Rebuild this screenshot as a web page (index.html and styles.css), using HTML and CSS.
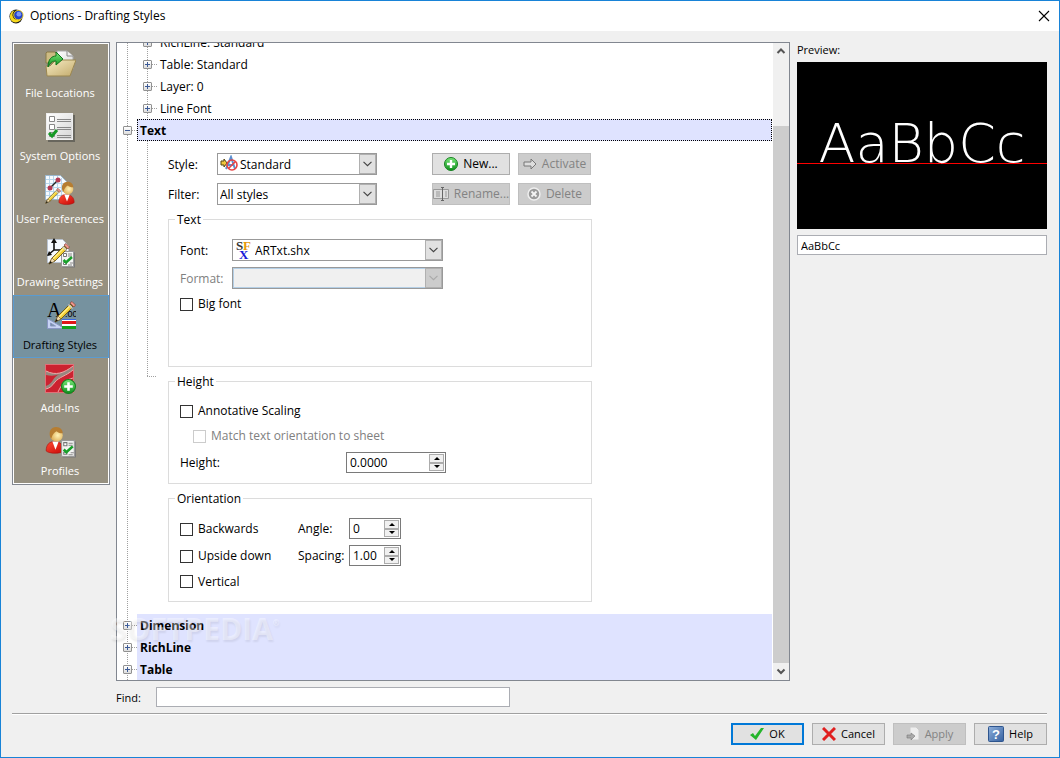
FILE: index.html
```html
<!DOCTYPE html>
<html lang="en">
<head>
    <meta charset="UTF-8">
    <title>Options - Drafting Styles</title>
    <link rel="stylesheet" href="styles.css">
</head>
<body>
    <!-- shared shapes -->
    <svg class="defs" width="0" height="0" aria-hidden="true">
        <defs>
            <linearGradient id="gFolder" x1="0" y1="0" x2="1" y2="1"><stop offset="0" stop-color="#f7ecc4"/><stop offset="1" stop-color="#c3ab6c"/></linearGradient>
            <linearGradient id="gPage" x1="0" y1="0" x2="1" y2="1"><stop offset="0" stop-color="#fff"/><stop offset="1" stop-color="#d5d5d5"/></linearGradient>
            <linearGradient id="gGreen" x1="0" y1="0" x2="0" y2="1"><stop offset="0" stop-color="#7be87b"/><stop offset="1" stop-color="#0d8f1b"/></linearGradient>
            <linearGradient id="gRed" x1="0" y1="0" x2="1" y2="1"><stop offset="0" stop-color="#ff4a32"/><stop offset="1" stop-color="#c80808"/></linearGradient>
            <linearGradient id="gBlue" x1="0" y1="0" x2="1" y2="1"><stop offset="0" stop-color="#8fb0dc"/><stop offset="1" stop-color="#34609f"/></linearGradient>
            <radialGradient id="gHead" cx=".6" cy=".5" r=".6"><stop offset="0" stop-color="#fff3b8"/><stop offset="1" stop-color="#dca94e"/></radialGradient>
            <symbol id="plusball" viewBox="0 0 14 14">
                <circle cx="7" cy="7" r="6.5" fill="url(#gGreen)" stroke="#16801f"/>
                <path d="M7 3v8M3 7h8" stroke="#fff" stroke-width="2.4"/>
            </symbol>
            <symbol id="checklist" viewBox="0 0 14 17">
                <rect x="1.5" y="1.5" width="12.500" height="15" fill="#777"/>
                <rect x=".5" y=".5" width="12" height="15" fill="#f4f4f4" stroke="#999"/>
                <path d="M2.500 2.500h3v3h-3zM2.500 11.500h3v2h-3z" fill="#fff" stroke="#777"/>
                <path d="M7 3h4M7 5h4M9 12h3M7 14h4" stroke="#888"/>
                <path d="M2.500 9l2.500 2.500L11 6" fill="none" stroke="#18a02a" stroke-width="2.500"/>
            </symbol>
            <symbol id="pencil" viewBox="0 0 22 22">
                <path d="M1 21l3-6 12-12 3 3L7 18z" fill="#f3cf35" stroke="#5b4610" stroke-width=".8"/>
                <path d="M5 16L16 5" stroke="#fff08a" stroke-width="1.200"/>
                <path d="M16 2l2-1.500 3.500 3.500L20 6z" fill="#f0978a" stroke="#8c4b42" stroke-width=".8"/>
                <path d="M14.500 3.500l4 4" stroke="#ccc" stroke-width="1.600"/>
                <path d="M1 21l3-6 3 3z" fill="#f5dfb4" stroke="#6a5428" stroke-width=".6"/>
                <path d="M1 21l1.500-3 1.500 1.500z" fill="#111"/>
            </symbol>
            <symbol id="person" viewBox="0 0 20 26">
                <path d="M1 23c0-6 3-9 8-9s9 3 9 9c-3 3-14 3-17 0z" fill="url(#gRed)" stroke="#a41410" stroke-width=".6"/>
                <path d="M7 14l3 8 3-8z" fill="#fff"/>
                <circle cx="11" cy="8" r="6" fill="url(#gHead)"/>
                <path d="M5 10C3 4 6 0 10.500 0S17 3 17 6c-3 0-5-1-6-2-2 1-4 3-5 7z" fill="#b67d31"/>
            </symbol>
            <symbol id="chevron" viewBox="0 0 17 20">
                <path d="M4 7.500l4.500 4.500L13 7.500" fill="none" stroke="currentColor" stroke-width="1.300"/>
            </symbol>
        </defs>
    </svg>

    <div class="window">
        <header class="titlebar">
            <svg class="app-icon" viewBox="0 0 16 16" aria-hidden="true">
                <ellipse cx="7.500" cy="8" rx="7" ry="7.500" fill="#15151c"/>
                <path d="M4 2C0 5 0 11 4 13.500c4 2 8 0 9.500-3C10 12 6 11.500 4.500 9S3.500 4 6 1.500z" fill="#f6d81c"/>
                <circle cx="10" cy="6.500" r="5" fill="#2444cf" stroke="#f1d21c"/>
                <circle cx="10.500" cy="5.500" r="2.500" fill="#7a96f5"/>
            </svg>
            <h1>Options - Drafting Styles</h1>
            <button class="close" aria-label="Close"><svg viewBox="0 0 12 12"><path d="M1 1l10 10M11 1L1 11" stroke="#000" stroke-width="1.100"/></svg></button>
        </header>

        <main class="content">
            <nav class="sidebar">
                <button class="nav-item">
                    <svg viewBox="0 0 32 32">
                        <path d="M2 5l1-1h8l2 2h13v9H2z" fill="#cdbb83" stroke="#8a7a49"/>
                        <path d="M13 3h10l6 5v13H13z" fill="url(#gPage)" stroke="#aaa"/>
                        <path d="M23 3v5h6" fill="#eee" stroke="#888"/>
                        <path d="M3 28l-1-10h4l6-6h20l-6 16z" fill="url(#gFolder)" stroke="#9b8750"/>
                        <path d="M4 19c0-8 4-11 8-11V4l7 7-7 6v-4c-4 0-6 2-8 6z" fill="url(#gGreen)" stroke="#11741c"/>
                    </svg>
                    <span>File Locations</span>
                </button>
                <button class="nav-item">
                    <svg viewBox="0 0 32 32">
                        <path d="M4 4h27v27H4z" fill="#68665d"/>
                        <rect x="2.500" y="2.500" width="26" height="26" fill="url(#gPage)" stroke="#eee"/>
                        <path d="M5.500 5.500h5v5h-5zM5.500 13.500h5v5h-5zM5.500 21.500h5v4h-5z" fill="#fff" stroke="#888"/>
                        <path d="M13 8.500h14M13 10.500h14M13 16.500h14M13 18.500h14M13 24.500h14M13 26.500h14" stroke="#888"/>
                        <path d="M5 22l3 3 5-6" fill="none" stroke="#159924" stroke-width="3"/>
                    </svg>
                    <span>System Options</span>
                </button>
                <button class="nav-item">
                    <svg viewBox="0 0 32 32">
                        <path d="M1.500 1.500h15l6 6v18h-21z" fill="#f7fbff" stroke="#9bb8cf"/>
                        <path d="M5.500 2v23M9.500 2v23M13.500 2v23M17.500 4v21M2 5.500h16M2 9.500h20M2 13.500h20M2 17.500h20M2 21.500h20" stroke="#b7d6ec"/>
                        <path d="M6 14l8-8" stroke="#222" stroke-width="1.500"/>
                        <circle cx="6" cy="14" r="2.500" fill="#b53952"/><circle cx="14" cy="6" r="2.500" fill="#b53952"/>
                        <use href="#person" x="14" y="7" width="18" height="25"/>
                        <use href="#pencil" x="1" y="14" width="16" height="16"/>
                    </svg>
                    <span>User Preferences</span>
                </button>
                <button class="nav-item">
                    <svg viewBox="0 0 32 32">
                        <path d="M3.500 2.500h15l6 6v17h-21z" fill="#f5f9ff" stroke="#b9c3d0"/>
                        <path d="M10 3v10M10 13h11M10 13l-6 5" fill="none" stroke="#111" stroke-width="1.600"/>
                        <path d="M10 1l3 5H7zM23 13l-5-3v6zM3 19l2-5 3 4z" fill="#111"/>
                        <use href="#checklist" x="17" y="14" width="14" height="17"/>
                        <use href="#pencil" x="4" y="6" width="22" height="22"/>
                    </svg>
                    <span>Drawing Settings</span>
                </button>
                <button class="nav-item selected" aria-current="page">
                    <svg viewBox="0 0 32 32">
                        <path d="M3.500 18.500v10h17z" fill="#c7d3f3" stroke="#8a97c4"/>
                        <path d="M6.500 23v3h5z" fill="#76929f" stroke="#8a97c4"/>
                        <text x="3" y="17" class="glyph-serif">A</text>
                        <text x="21" y="17" class="glyph-small">.00</text>
                        <path d="M18 19.500h14" stroke="#3c6be0"/><path d="M18 20h14v1H18zM18 24h14v2H18z" fill="#fff"/><path d="M18 21h14v3H18z" fill="#e01818"/><path d="M18 26h14v3H18z" fill="#13a31c"/>
                        <use href="#pencil" x="10" y="1" width="22" height="22"/>
                    </svg>
                    <span>Drafting Styles</span>
                </button>
                <button class="nav-item">
                    <svg viewBox="0 0 32 32">
                        <rect x="1.500" y="1.500" width="28" height="28" fill="#cc2230" stroke="#e07078"/>
                        <path d="M2 8c10 5 18 2 27-5v4c-7 6-14 7-18 12-3 4-5 6-9 7v-3c8-3 6-9 14-12-5 2-9 2-14 1z" fill="#98877f"/>
                        <path d="M2 8c10 5 18 2 27-5M29 7c-7 6-14 7-18 12-3 4-5 6-9 7M29 15c-7 2-11 5-15 14" fill="none" stroke="#efa5a5"/>
                        <use href="#plusball" x="17" y="16" width="15" height="15"/>
                    </svg>
                    <span>Add-Ins</span>
                </button>
                <button class="nav-item">
                    <svg viewBox="0 0 32 32">
                        <use href="#person" x="1" y="1" width="21" height="27"/>
                        <use href="#checklist" x="17" y="14" width="15" height="18"/>
                    </svg>
                    <span>Profiles</span>
                </button>
            </nav>

            <section class="styles-column">
                <div class="tree">
                    <div class="tree-body">
                        <div class="branch">
                            <div class="row child"><button class="toggle plus" aria-label="Expand"></button><span>RichLine: Standard</span></div>
                            <div class="row child"><button class="toggle plus" aria-label="Expand"></button><span>Table: Standard</span></div>
                            <div class="row child"><button class="toggle plus" aria-label="Expand"></button><span>Layer: 0</span></div>
                            <div class="row child"><button class="toggle plus" aria-label="Expand"></button><span>Line Font</span></div>
                        </div>
                        <div class="row root focused"><button class="toggle" aria-label="Collapse"></button><span>Text</span></div>

                        <form class="panel">
                            <div class="style-rows">
                                <label for="style">Style:</label>
                                <div class="combo with-icon">
                                    <select id="style"><option>Standard</option></select>
                                    <svg class="combo-icon" viewBox="0 0 18 18" aria-hidden="true">
                                        <path d="M6 14l5-12 4 12M8 10h6" fill="none" stroke="#5a8fd0" stroke-width="2"/>
                                        <path d="M1 6h3V4l3 4-3 4v-2H1z" fill="#f0c53c" stroke="#554715"/>
                                        <circle cx="12" cy="10" r="5" fill="none" stroke="#e64444" stroke-width="1.600"/>
                                        <path d="M8.500 13.500l7-7" stroke="#e64444" stroke-width="1.600"/>
                                    </svg>
                                    <svg class="drop"><use href="#chevron"/></svg>
                                </div>
                                <button type="button" class="btn"><svg viewBox="0 0 14 14"><use href="#plusball"/></svg>New...</button>
                                <button type="button" class="btn" disabled><svg viewBox="0 0 14 14"><path d="M1 5h7V2l5 5-5 5V9H1z" fill="#ddd" stroke="#777"/></svg>Activate</button>

                                <label for="filter">Filter:</label>
                                <div class="combo">
                                    <select id="filter"><option>All styles</option></select>
                                    <svg class="drop"><use href="#chevron"/></svg>
                                </div>
                                <button type="button" class="btn" disabled><svg class="wide" viewBox="0 0 16 14"><path d="M.5 2.500h15v9H.5z" fill="#ddd" stroke="#999"/><path d="M3 5h4M3 7h4M3 9h4M12 5h2M12 7h2M12 9h2" stroke="#999"/><path d="M8 .5h3M9.500 0v14M8 13.500h3" stroke="#666"/></svg>Rename...</button>
                                <button type="button" class="btn" disabled><svg viewBox="0 0 14 14"><circle cx="7" cy="7" r="6" fill="#9a9a9a" stroke="#eee" stroke-width="1.500"/><path d="M4.500 4.500l5 5M9.500 4.500l-5 5" stroke="#f4f4f4" stroke-width="1.800"/></svg>Delete</button>
                            </div>

                            <fieldset class="text-group">
                                <legend>Text</legend>
                                <div class="font-grid">
                                    <label for="font">Font:</label>
                                    <div class="combo with-icon">
                                        <select id="font"><option>ARTxt.shx</option></select>
                                        <svg class="combo-icon" viewBox="0 0 18 18" aria-hidden="true">
                                            <text x="1" y="9" class="glyph-shx dark">S</text>
                                            <text x="8" y="9" class="glyph-shx gold">F</text>
                                            <text x="4" y="18" class="glyph-shx blue">X</text>
                                        </svg>
                                        <svg class="drop"><use href="#chevron"/></svg>
                                    </div>
                                    <label for="format" class="off">Format:</label>
                                    <div class="combo disabled">
                                        <select id="format" disabled><option></option></select>
                                        <svg class="drop"><use href="#chevron"/></svg>
                                    </div>
                                </div>
                                <label class="check"><input type="checkbox">Big font</label>
                            </fieldset>

                            <fieldset class="height-group">
                                <legend>Height</legend>
                                <label class="check"><input type="checkbox">Annotative Scaling</label>
                                <label class="check indent off"><input type="checkbox" disabled>Match text orientation to sheet</label>
                                <div class="height-row">
                                    <label for="height">Height:</label>
                                    <div class="spin">
                                        <input type="text" id="height" value="0.0000">
                                        <div class="arrows"><button type="button" class="up" aria-label="Increase"></button><button type="button" class="down" aria-label="Decrease"></button></div>
                                    </div>
                                </div>
                            </fieldset>

                            <fieldset class="orientation-group">
                                <legend>Orientation</legend>
                                <div class="orientation-grid">
                                    <label class="check"><input type="checkbox">Backwards</label>
                                    <label for="angle">Angle:</label>
                                    <div class="spin">
                                        <input type="text" id="angle" value="0">
                                        <div class="arrows"><button type="button" class="up" aria-label="Increase"></button><button type="button" class="down" aria-label="Decrease"></button></div>
                                    </div>
                                    <label class="check"><input type="checkbox">Upside down</label>
                                    <label for="spacing">Spacing:</label>
                                    <div class="spin">
                                        <input type="text" id="spacing" value="1.00">
                                        <div class="arrows"><button type="button" class="up" aria-label="Increase"></button><button type="button" class="down" aria-label="Decrease"></button></div>
                                    </div>
                                    <label class="check"><input type="checkbox">Vertical</label>
                                </div>
                            </fieldset>
                        </form>

                        <div class="row root"><button class="toggle plus" aria-label="Expand"></button><span>Dimension</span></div>
                        <div class="row root"><button class="toggle plus" aria-label="Expand"></button><span>RichLine</span></div>
                        <div class="row root"><button class="toggle plus" aria-label="Expand"></button><span>Table</span></div>
                    </div>
                    <div class="scrollbar">
                        <button aria-label="Scroll up"><svg viewBox="0 0 16 16"><path d="M4.500 10L8 6.500l3.500 3.500" fill="none" stroke="#555" stroke-width="2"/></svg></button>
                        <div class="thumb"></div>
                        <button aria-label="Scroll down"><svg viewBox="0 0 16 16"><path d="M4.500 6.500L8 10l3.500-3.500" fill="none" stroke="#555" stroke-width="2"/></svg></button>
                    </div>
                    <div class="watermark">SOFTPEDIA<sup>®</sup></div>
                </div>
                <div class="find">
                    <label for="find">Find:</label>
                    <input type="text" id="find">
                </div>
            </section>

            <aside class="preview">
                <label for="sample">Preview:</label>
                <div class="canvas"><span>AaBbCc</span></div>
                <input type="text" id="sample" value="AaBbCc">
            </aside>
        </main>

        <footer class="footer">
            <button class="btn primary"><svg viewBox="0 0 14 14"><path d="M0 8l3-2 2 3 6-8 3 0-8 12z" fill="#25b52c"/></svg>OK</button>
            <button class="btn"><svg viewBox="0 0 14 14"><path d="M1 1l12 12M13 1L1 13" stroke="#e01f1f" stroke-width="3"/></svg>Cancel</button>
            <button class="btn" disabled><svg viewBox="0 0 14 14"><path d="M4 0h6l3 3v10H4z" fill="#eee" stroke="#ccc"/><path d="M1 8h4V6l4 3-4 4v-2H1z" fill="#aaa" stroke="#777" stroke-width=".6"/></svg>Apply</button>
            <button class="btn"><svg class="wide" viewBox="0 0 16 16"><rect x=".5" y=".5" width="15" height="15" rx="1" fill="url(#gBlue)" stroke="#2e558e"/><text x="4" y="13" class="glyph-help">?</text></svg>Help</button>
        </footer>
    </div>
</body>
</html>
```
FILE: styles.css
```css
* {
    box-sizing: border-box;
}

body {
    margin: 0;
    font-family: "Open Sans", "Noto Sans", sans-serif;
    font-size: 12px;
    line-height: 16px;
    color: #000;
}

button, input, select {
    font: inherit;
    color: inherit;
    margin: 0;
    padding: 0;
}

button {
    border: none;
    background: none;
}

.defs {
    position: absolute;
}

.window {
    display: flex;
    flex-direction: column;
    height: 100vh;
    border: 1px solid #1883d7;
    background-color: #f0f0f0;
}

/* title bar */

.titlebar {
    display: flex;
    align-items: center;
    gap: 6px;
    height: 30px;
    padding: 0 9px 0 8px;
    background-color: #fff;
}

.titlebar h1 {
    flex: 1;
    margin: 0;
    font-size: 12px;
    font-weight: normal;
}

.app-icon {
    width: 15px;
    height: 15px;
}

.close {
    display: flex;
}

.close svg {
    width: 12px;
    height: 12px;
}

.content {
    display: flex;
    flex: 1;
    min-height: 0;
    gap: 6px;
    padding: 11px 12px 6px 11px;
}

/* left icon bar */

.sidebar {
    display: flex;
    flex-direction: column;
    align-self: flex-start;
    width: 98px;
    border: 1px solid #828790;
    background-color: #969080;
    box-shadow: inset 0 0 0 1px #fff;
}

.nav-item {
    display: flex;
    flex-direction: column;
    align-items: center;
    gap: 6px;
    height: 63px;
    padding: 5px 2px 0 0;
    font-size: 11px;
    line-height: 14px;
    color: #fff;
    white-space: nowrap;
}

.nav-item svg {
    width: 32px;
    height: 32px;
    flex: none;
}

.nav-item.selected {
    padding-top: 4px;
    border: 1px solid #5a9bd0;
    background-color: #76929f;
    color: #000;
}

/* tree */

.styles-column {
    display: flex;
    flex-direction: column;
    flex: 1;
    min-width: 0;
    gap: 6px;
}

.tree {
    position: relative;
    display: flex;
    flex: 1;
    min-height: 0;
    border: 1px solid #828790;
    background-color: #fff;
}

.tree-body {
    display: flex;
    flex-direction: column;
    justify-content: flex-end;
    flex: 1;
    overflow: hidden;
    background: repeating-linear-gradient(#a0a0a0 0 1px, transparent 1px 2px) 10px 0 / 1px 100% no-repeat;
}

.branch {
    background: repeating-linear-gradient(#a0a0a0 0 1px, transparent 1px 2px) 30px 0 / 1px 100% no-repeat;
}

.row {
    display: flex;
    align-items: center;
    flex: none;
    height: 22px;
    padding-left: 6px;
    background: repeating-linear-gradient(90deg, #a0a0a0 0 1px, transparent 1px 2px) 15px 11px / 5px 1px no-repeat;
}

.row.child {
    padding-left: 26px;
    background-position: 35px 11px;
}

.row span {
    flex: 1;
    padding: 4px 3px 2px;
}

.row.child span {
    padding-left: 8px;
}

.row.root span {
    margin-left: 5px;
    padding: 3px 2px 1px;
    border: 1px solid #dfe3ff;
    background-color: #dfe3ff;
    font-weight: bold;
}

.row.root.focused span {
    border: 1px dotted #000;
}

.toggle {
    flex: none;
    width: 9px;
    height: 9px;
    border: 1px solid #919191;
    border-radius: 1px;
    background: linear-gradient(#3c5a96, #3c5a96) center / 5px 1px no-repeat, linear-gradient(#fff, #ddd);
}

.toggle.plus {
    background: linear-gradient(#3c5a96, #3c5a96) center / 5px 1px no-repeat, linear-gradient(#3c5a96, #3c5a96) center / 1px 5px no-repeat, linear-gradient(#fff, #ddd);
}

.scrollbar {
    display: flex;
    flex-direction: column;
    width: 17px;
    border-left: 1px solid #fff;
    background-color: #f0f0f0;
}

.scrollbar button {
    display: flex;
    height: 17px;
}

.scrollbar svg {
    width: 16px;
    height: 16px;
}

.thumb {
    flex: 1;
    margin-top: 66px;
    background-color: #cdcdcd;
}

/* text style panel */

.panel {
    flex: none;
    padding: 12px 0 12px 51px;
    background:
        repeating-linear-gradient(#a0a0a0 0 1px, transparent 1px 2px) 30px 0 / 1px 236px no-repeat,
        repeating-linear-gradient(90deg, #a0a0a0 0 1px, transparent 1px 2px) 30px 235px / 10px 1px no-repeat;
}

.style-rows {
    display: grid;
    grid-template-columns: 49px 160px 55px 78px 81px;
    grid-template-rows: 22px 22px;
    row-gap: 8px;
    align-items: center;
    margin-bottom: 5px;
}

.style-rows .btn:nth-of-type(odd) {
    grid-column: 4;
}

.style-rows .btn:nth-of-type(even) {
    grid-column: 5;
    margin-left: 8px;
    width: 73px;
}

.style-rows label,
.font-grid label,
.height-row > label,
.orientation-grid > label {
    padding-top: 1px;
}

.combo {
    display: grid;
    grid-template-columns: 1fr;
    height: 22px;
    border: 1px solid #999;
    background-color: #fff;
}

.combo > * {
    grid-area: 1 / 1;
}

.combo select {
    appearance: none;
    width: 100%;
    padding: 1px 20px 0 2px;
    border: none;
    outline: none;
    background: transparent;
    opacity: 1;
}

.combo.with-icon select {
    padding-left: 22px;
}

.combo-icon {
    width: 18px;
    height: 18px;
    margin-left: 2px;
    align-self: center;
    pointer-events: none;
}

.drop {
    justify-self: end;
    width: 17px;
    height: 20px;
    border: 1px solid #b0b0b0;
    background-color: #e1e1e1;
    color: #444;
    pointer-events: none;
}

.combo.disabled select {
    border: 1px solid #b4cfe6;
    background-color: #f0f0f0;
}

.combo.disabled .drop {
    background-color: #ccc;
    color: #aaa;
}

fieldset {
    width: 424px;
    margin: 0;
    padding: 0 11px 0 6px;
    border: 1px solid #dcdcdc;
}

legend {
    padding: 2px 2px 0;
    line-height: 16px;
}

fieldset > :not(legend) {
    margin-left: 5px;
}

.off {
    color: #808080;
}

.text-group {
    height: 157px;
    margin-bottom: 5px;
}

.font-grid {
    display: grid;
    grid-template-columns: 52px 211px;
    row-gap: 6px;
    align-items: center;
    padding-top: 11px;
    margin-bottom: 6px;
}

.check {
    display: flex;
    align-items: center;
    gap: 5px;
    height: 18px;
}

.check input {
    appearance: none;
    width: 13px;
    height: 13px;
    border: 1px solid #333;
    background-color: #fff;
}

.check input:disabled {
    border-color: #ccc;
}

.height-group {
    height: 112px;
    margin-bottom: 5px;
    padding-top: 12px;
}

fieldset > .indent {
    margin: 7px 0 7px 18px;
}

.height-row {
    display: grid;
    grid-template-columns: 166px 100px;
    align-items: center;
}

.spin {
    display: flex;
    height: 21px;
    border: 1px solid #7a7a7a;
    background-color: #fff;
}

.spin input {
    flex: 1;
    width: 0;
    padding-left: 3px;
    border: none;
    outline: none;
    background: none;
}

.arrows {
    display: flex;
    flex-direction: column;
    width: 15px;
    margin: 1px;
}

.arrows button {
    flex: 1;
    display: flex;
    align-items: center;
    justify-content: center;
    border: 1px solid #acacac;
    background-color: #f0f0f0;
}

.arrows button::before {
    content: "";
    border: 3px solid transparent;
}

.arrows .up::before {
    border-top: none;
    border-bottom-color: #000;
}

.arrows .down::before {
    border-bottom: none;
    border-top-color: #000;
}

.orientation-group {
    height: 113px;
}

.orientation-grid {
    display: grid;
    grid-template-columns: 118px 51px 52px;
    row-gap: 6px;
    align-items: center;
    padding-top: 11px;
}

/* buttons */

.btn {
    display: flex;
    align-items: center;
    justify-content: center;
    gap: 5px;
    width: 100%;
    height: 22px;
    border: 1px solid #adadad;
    background-color: #e1e1e1;
    white-space: nowrap;
}

.btn svg {
    width: 14px;
    height: 14px;
    flex: none;
}

.btn svg.wide {
    width: 16px;
    height: 16px;
}

.btn:disabled {
    border-color: #bfbfbf;
    background-color: #ccc;
    color: #838383;
}

.btn.primary {
    border: 2px solid #0078d7;
}

/* find */

.find {
    display: flex;
    align-items: center;
    height: 20px;
}

.find label {
    width: 40px;
    padding-top: 1px;
    font-size: 11px;
}

.find input {
    width: 354px;
    height: 20px;
    border: 1px solid #abadb3;
    background-color: #fff;
}

/* preview */

.preview {
    display: flex;
    flex-direction: column;
    width: 251px;
    padding-left: 1px;
    font-size: 11px;
}

.preview label {
    margin-bottom: 4px;
}

.canvas {
    display: flex;
    justify-content: center;
    height: 167px;
    margin-bottom: 6px;
    background: linear-gradient(#f00, #f00) 0 101px / 100% 1px no-repeat #000;
    color: #fff;
    font-family: "DejaVu Sans", sans-serif;
    font-size: 54px;
    font-weight: 200;
    line-height: 164px;
}

.preview input {
    height: 20px;
    padding: 0 3px;
    border: 1px solid #abadb3;
    background-color: #fff;
}

/* bottom buttons */

.footer {
    display: flex;
    justify-content: flex-end;
    gap: 8px;
    margin: 0 12px 0 11px;
    padding: 9px 0 12px;
    border-top: 1px solid #a0a0a0;
    box-shadow: inset 0 1px 0 #fff;
    font-size: 11px;
}

.footer .btn {
    width: 73px;
}

.watermark {
    position: absolute;
    left: -7px;
    bottom: 31px;
    font-family: "Open Sans", sans-serif;
    font-size: 30px;
    font-weight: bold;
    line-height: 40px;
    color: rgba(255, 255, 255, 0.4);
    text-shadow: 1px 2px 2px rgba(0, 0, 0, 0.07);
    pointer-events: none;
}

.watermark sup {
    font-size: 8px;
    line-height: 8px;
    vertical-align: 14px;
}

/* lettering inside the icons */

.glyph-serif {
    font: 20px "Liberation Serif", serif;
}

.glyph-small {
    font: 9px "Liberation Sans", sans-serif;
}

.glyph-shx {
    font: bold 13px "Liberation Serif", serif;
}

.glyph-shx.dark {
    fill: #333;
}

.glyph-shx.gold {
    fill: #e69a0b;
}

.glyph-shx.blue {
    fill: #1818d8;
}

.glyph-help {
    font: bold 13px "Liberation Sans", sans-serif;
    fill: #fff;
}
```
